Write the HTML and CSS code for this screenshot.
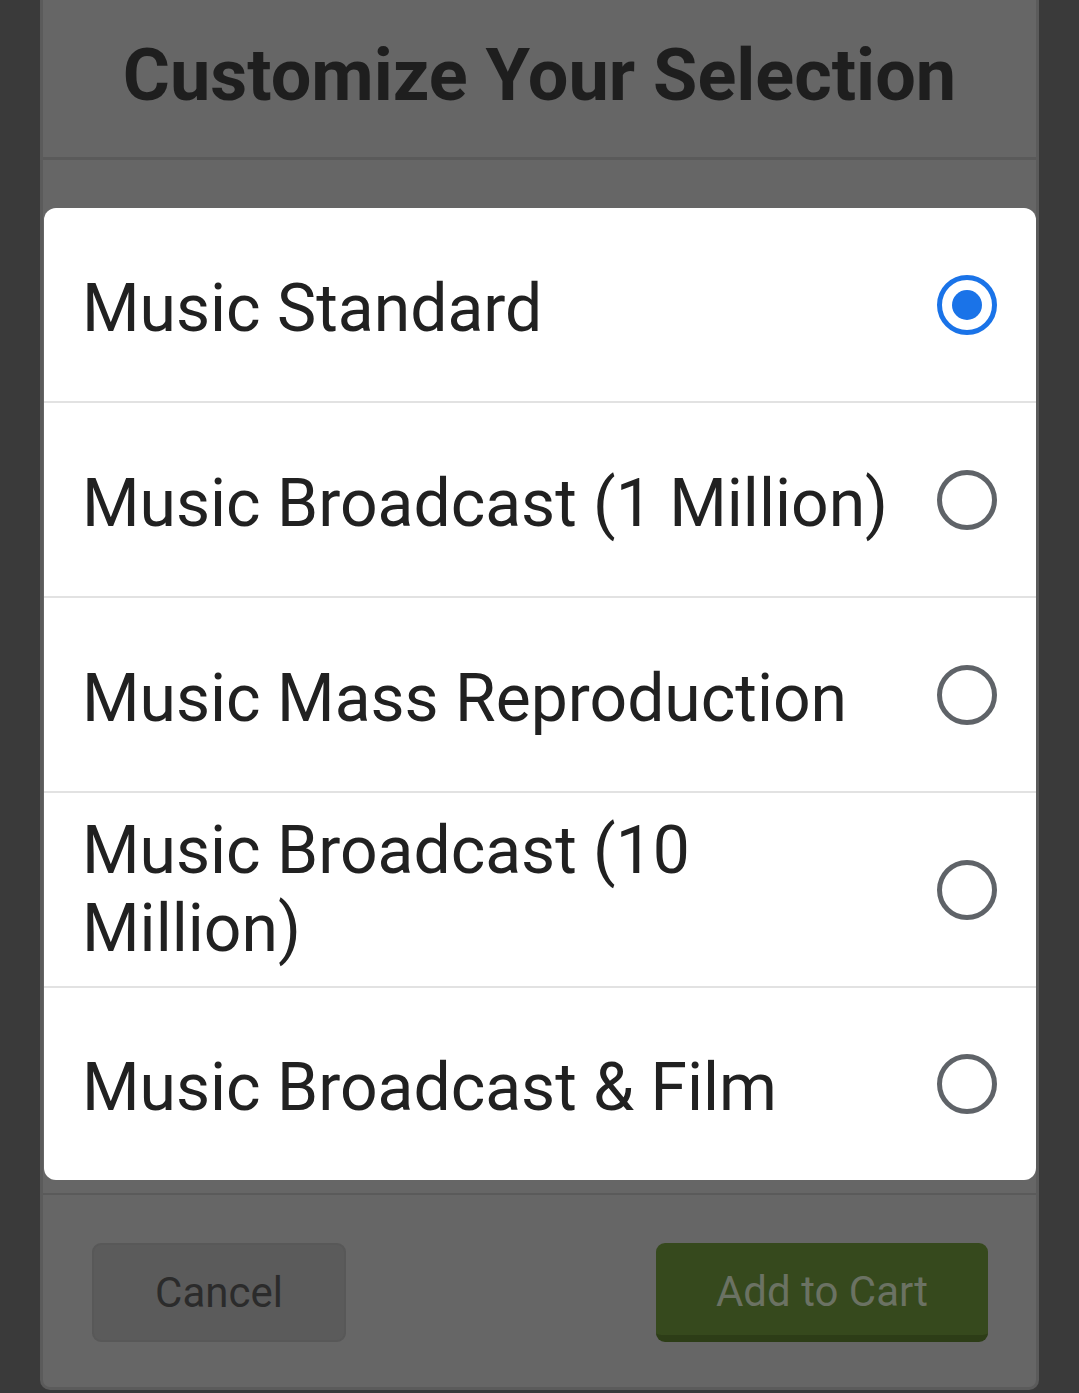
FILE: index.html
```html
<!DOCTYPE html>
<html>
<head>
<meta charset="utf-8">
<link rel="stylesheet" href="styles.css">
</head>
<body>
<div class="card">
  <div class="card-header"><h1 class="title">Customize Your Selection</h1></div>
  <div class="card-body"></div>
  <div class="card-footer">
    <button class="btn btn-cancel">Cancel</button>
    <button class="btn btn-add">Add to Cart</button>
  </div>
</div>
<div class="dialog">
  <div class="option"><span class="label">Music Standard</span><span class="radio checked"></span></div>
  <div class="option"><span class="label">Music Broadcast (1 Million)</span><span class="radio"></span></div>
  <div class="option"><span class="label">Music Mass Reproduction</span><span class="radio"></span></div>
  <div class="option option-wrap"><span class="label">Music Broadcast (10 Million)</span><span class="radio"></span></div>
  <div class="option"><span class="label">Music Broadcast &amp; Film</span><span class="radio"></span></div>
</div>
</body>
</html>
```
FILE: styles.css
```css
html, body {
  margin: 0;
  padding: 0;
  background: #3a3a3a;
  font-family: Roboto, "Liberation Sans", sans-serif;
  height: 1393px;
  overflow: hidden;
}
body { position: relative; }
.card {
  margin-left: 40px;
  width: 999px;
  box-sizing: border-box;
  background: #666666;
  border-left: 3px solid #5b5b5b;
  border-right: 3px solid #5b5b5b;
  border-bottom: 3px solid #5b5b5b;
  border-radius: 0 0 10px 10px;
  display: flex;
  flex-direction: column;
}
.card-header {
  height: 157px;
  border-bottom: 3px solid #5a5a5a;
  display: flex;
  align-items: center;
  justify-content: center;
}
.title {
  margin: 0;
  font-size: 72px;
  font-weight: 700;
  color: #1e1e1e;
  transform: translateY(-3px);
}
.card-body {
  height: 1033px;
  border-bottom: 2px solid #5a5a5a;
}
.card-footer {
  height: 192px;
  display: flex;
  justify-content: space-between;
  align-items: flex-start;
  padding: 48px 48px 0 49px;
  box-sizing: border-box;
}
.btn {
  font-family: Roboto, "Liberation Sans", sans-serif;
  font-size: 42px;
  height: 99px;
  border-radius: 9px;
  box-sizing: border-box;
  padding: 0;
  cursor: pointer;
}
.btn-cancel {
  width: 254px;
  background: #5b5b5b;
  border: 2px solid #585858;
  color: #2b2b2b;
}
.btn-add {
  width: 332px;
  background: #36491d;
  border: none;
  border-bottom: 7px solid #2d3d17;
  color: #6b7263;
  padding-top: 4px;
}
.dialog {
  position: absolute;
  top: 208px;
  left: 44px;
  width: 992px;
  background: #ffffff;
  border-radius: 12px;
  display: flex;
  flex-direction: column;
  overflow: hidden;
}
.option {
  height: 193px;
  box-sizing: border-box;
  display: flex;
  align-items: center;
  padding: 0 39px 0 38px;
}
.option + .option {
  height: 195px;
  border-top: 2px solid #e2e2e2;
}
.option:last-child { height: 194px; }
.label {
  flex: 1;
  font-size: 66px;
  color: #212121;
  line-height: 1.172;
  padding-right: 30px;
  padding-top: 8px;
}
.option-wrap .label { padding-top: 0; }
.radio {
  width: 60px;
  height: 60px;
  box-sizing: border-box;
  border: 5px solid #5f6368;
  border-radius: 50%;
  flex: none;
  display: flex;
  align-items: center;
  justify-content: center;
}
.radio.checked { border-color: #1a73e8; }
.radio.checked::after {
  content: "";
  width: 30px;
  height: 30px;
  border-radius: 50%;
  background: #1a73e8;
}
```
